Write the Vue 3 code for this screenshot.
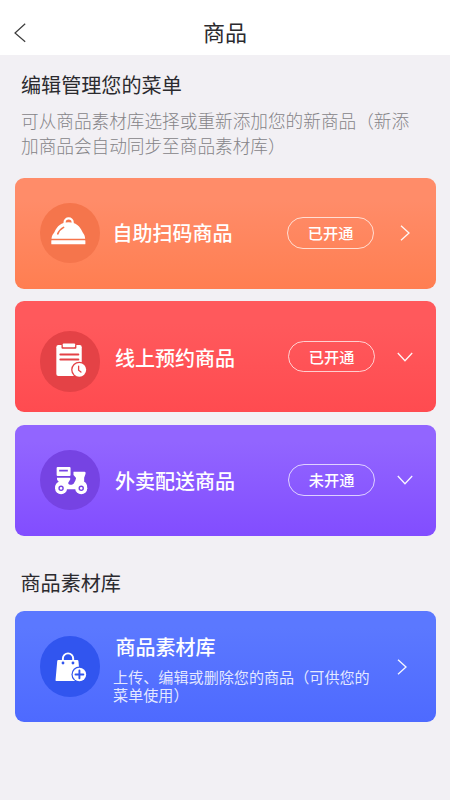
<script setup>
const services = [
  { id: 'scan', title: '自助扫码商品', status: '已开通', arrow: 'right' },
  { id: 'booking', title: '线上预约商品', status: '已开通', arrow: 'down' },
  { id: 'delivery', title: '外卖配送商品', status: '未开通', arrow: 'down' }
]
</script>

<template>
  <div class="page">
    <header class="topbar">
      <svg class="back" viewBox="0 0 12 20" width="12" height="20">
        <path d="M11.2 0.8 L1 10 L11.2 18.8" />
      </svg>
      <h1>商品</h1>
    </header>

    <section class="intro">
      <h2>编辑管理您的菜单</h2>
      <p>可从商品素材库选择或重新添加您的新商品（新添<br />加商品会自动同步至商品素材库）</p>
    </section>

    <main class="cards">
      <article v-for="s in services" :key="s.id" class="card" :class="s.id">
        <div class="badge">
          <svg v-if="s.id === 'scan'" viewBox="0 0 60 60">
            <path class="line" stroke-width="2.2" d="M24.4 20.5 V19 A4 3.8 0 0 1 32.4 19 V20.5" />
            <path class="fill" d="M11.4 35.5 C11.8 31.5 13.5 30.5 14.5 28.5 C17 23 21 19 28.3 19 C35.6 19 39.6 23 42 28.5 C43 30.5 44.6 31.5 44.8 35.5 Z" />
            <rect class="fill" x="11.2" y="37" width="33.8" height="3.8" rx=".5" />
            <path class="cut" stroke-width="1.6" d="M17.6 30.6 C18.6 28 20.4 25.8 23.4 24.2" />
          </svg>
          <svg v-else-if="s.id === 'booking'" viewBox="0 0 60 60">
            <rect class="fill" x="16.2" y="14" width="25.2" height="30.6" rx="2" />
            <rect class="hole" x="21.3" y="11" width="14.8" height="6.5" rx="1" />
            <rect class="fill" x="22.6" y="12.4" width="12.2" height="3.8" rx=".8" />
            <path class="cut" stroke-width="2" d="M20.2 23.3 H38 M20.2 28.2 H38" />
            <circle class="hole" cx="39" cy="38.5" r="8.1" />
            <circle class="fill" cx="39" cy="38.5" r="6.8" />
            <path class="cut" stroke-width="1.3" d="M38.3 34.9 V38.9 L40.6 40.7" />
          </svg>
          <svg v-else viewBox="0 0 60 60">
            <path class="fill" fill-rule="evenodd" d="M17.5 16.8 H29.3 Q30.3 16.8 30.3 17.8 V24.9 Q30.3 25.9 29.3 25.9 H17.5 Q16.5 25.9 16.5 24.9 V17.8 Q16.5 16.8 17.5 16.8 Z M19 19.5 V21.4 H27.6 V19.5 Z" />
            <path class="fill" d="M16.8 27.4 H29.5 Q30.6 28.2 29.8 29.6 L28 32.6 Q27.6 34.4 29.6 34.4 L31.4 34.4 Q33.6 34 35 30.4 L35.8 27.8 L33.2 24.8 V21.6 H44.2 Q45.6 21.6 45.2 23.5 L43.8 27.5 V31.6 Q46.6 33 46.8 37 L36 39 H25 L15 37.5 Q15 33 18.6 31.5 Q16.4 30 16.8 27.4 Z" />
            <circle class="fill" cx="20.9" cy="38" r="6" />
            <circle class="fill" cx="40.9" cy="38" r="6" />
            <circle class="cut" cx="20.9" cy="38" r="2" stroke-width="1.4" />
            <circle class="cut" cx="40.9" cy="38" r="2" stroke-width="1.4" />
          </svg>
        </div>
        <h3>{{ s.title }}</h3>
        <span class="status">{{ s.status }}</span>
        <svg v-if="s.arrow === 'right'" class="arrow right" viewBox="0 0 10 16">
          <path d="M1 0.8 L9 8 L1 15.2" />
        </svg>
        <svg v-else class="arrow down" viewBox="0 0 16 10">
          <path d="M0.8 1 L8 8.8 L15.2 1" />
        </svg>
      </article>
    </main>

    <h2 class="library-heading">商品素材库</h2>

    <article class="card library">
      <div class="badge">
        <svg viewBox="0 0 60 60">
          <path class="line" stroke-width="1.9" d="M22.7 26 V22.3 A5.1 5.1 0 0 1 32.9 22.3 V26" />
          <path class="fill" d="M18.1 23.9 H37 Q38 23.9 38.1 24.9 L40 44.6 H16.1 Q15.3 44.6 15.4 43.8 L17.1 24.9 Q17.2 23.9 18.1 23.9 Z" />
          <circle class="hole" cx="22.8" cy="26.8" r="1.4" />
          <circle class="hole" cx="32.7" cy="26.8" r="1.4" />
          <circle class="hole" cx="39.1" cy="38.1" r="7.9" />
          <circle class="fill" cx="39.1" cy="38.1" r="6.7" />
          <path class="cut" stroke-width="1.9" d="M35.2 38.1 H43 M39.1 34.2 V42" />
        </svg>
      </div>
      <div class="library-text">
        <h3>商品素材库</h3>
        <p>上传、编辑或删除您的商品（可供您的<br />菜单使用）</p>
      </div>
      <svg class="arrow right" viewBox="0 0 10 16">
        <path d="M1 0.8 L9 8 L1 15.2" />
      </svg>
    </article>
  </div>
</template>

<style>
body {
  margin: 0;
  background: #f2f0f4;
}
</style>

<style scoped>
.page {
  box-sizing: border-box;
  width: 450px;
  height: 800px;
  overflow: hidden;
  background: #f2f0f4;
  color: #2b2a2e;
  font-family: "Noto Sans CJK SC", sans-serif;
}
h1, h2, h3, p {
  margin: 0;
  font-weight: 400;
  white-space: nowrap;
}
svg {
  display: block;
  fill: none;
}
.topbar {
  display: grid;
  grid-template-columns: 40px 1fr 40px;
  align-items: center;
  box-sizing: border-box;
  height: 55px;
  padding: 11px 0 0;
  background: #fff;
}
.back {
  margin-left: 14px;
  stroke: #3c3c3c;
  stroke-width: 1.2;
}
h1 {
  padding-bottom: 5px;
  text-align: center;
  font-size: 22px;
  line-height: 32px;
}
.intro {
  height: 122.7px;
  box-sizing: border-box;
  padding: 15px 0 0 21px;
}
h2 {
  font-size: 20.1px;
  line-height: 30px;
}
.intro p {
  margin-top: 9px;
  font-size: 17.65px;
  line-height: 24.5px;
  font-weight: 300;
  color: #858488;
}
.cards {
  display: grid;
  gap: 12.5px;
}
.card {
  display: grid;
  grid-template-columns: 60.5px 174px 87px 1fr;
  align-items: center;
  box-sizing: border-box;
  width: 420.6px;
  height: 111px;
  margin-left: 15.2px;
  padding-left: 24.4px;
  border-radius: 9px;
  color: #fff;
}
.badge {
  width: 60.5px;
  height: 60.5px;
  border-radius: 50%;
  background: var(--disc);
}
.scan {
  --disc: #f5754c;
  background: linear-gradient(#ff8c69 20%, #ff7e51);
}
.booking {
  --disc: #e44246;
  background: linear-gradient(#ff595c 20%, #ff4b50);
}
.delivery {
  --disc: #7643e3;
  background: linear-gradient(#9265ff 15%, #824dff);
}
.library {
  --disc: #3155ef;
  background: linear-gradient(#5b78ff 15%, #4e6aff);
}
.fill {
  fill: #fff;
}
.hole {
  fill: var(--disc);
}
.line {
  stroke: #fff;
}
.cut {
  stroke: var(--disc);
  stroke-linecap: round;
}
h3 {
  padding-left: 12.5px;
  font-size: 20px;
  line-height: 30px;
  font-weight: 500;
}
.booking .badge {
  margin-top: 10px;
}
.booking h3,
.delivery h3 {
  padding: 2px 0 0 15px;
}
.status {
  box-sizing: border-box;
  width: 87px;
  height: 31.5px;
  margin-left: 13px;
  border: 1px solid rgba(255, 255, 255, .72);
  border-radius: 16px;
  text-align: center;
  font-size: 15.2px;
  line-height: 28px;
  font-weight: 500;
}
.booking .status,
.delivery .status {
  margin-left: 14px;
}
.arrow {
  stroke: rgba(255, 255, 255, .95);
  stroke-width: 1.3;
}
.arrow.right {
  width: 10px;
  height: 16px;
  margin-left: 39px;
}
.arrow.down {
  width: 16px;
  height: 10px;
  margin-left: 36px;
}
.library-heading {
  padding: 32px 0 13px 20.5px;
}
.card.library {
  grid-template-columns: 60.5px 297px 1fr;
}
.library .badge {
  margin-top: 1px;
}
.library .arrow {
  margin: 1px 0 0;
}
.library-text {
  padding-top: 3px;
}
.library-text h3 {
  padding-left: 15.5px;
}
.library-text p {
  padding: 4.5px 0 0 13px;
  font-size: 15.1px;
  line-height: 18px;
  color: rgba(255, 255, 255, .85);
}
</style>
